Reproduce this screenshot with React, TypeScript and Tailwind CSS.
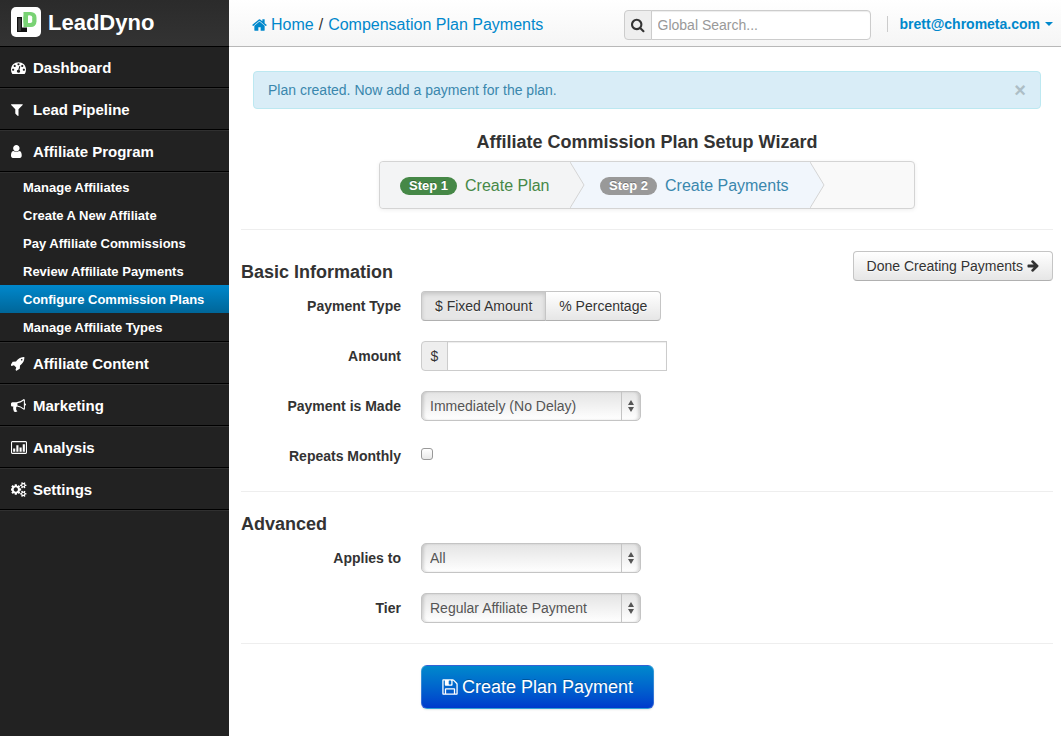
import { useState, type ReactNode } from 'react'

type IconDef = { box: string; d: string }

const ICONS: Record<string, IconDef> = {
  home: {
    box: '64 0 1664 1792',
    d: 'M1472 992v480q0 26-19 45t-45 19h-384v-384h-256v384h-384q-26 0-45-19t-19-45v-480q0-1 .5-3t.5-3l575-474 575 474q1 2 1 6zm223-69l-62 74q-8 9-21 11h-3q-13 0-21-7l-692-577-692 577q-12 8-24 7-13-2-21-11l-62-74q-8-10-7-23.5t11-21.5l719-599q32-26 76-26t76 26l244 204v-195q0-14 9-23t23-9h192q14 0 23 9t9 23v408l219 182q10 8 11 21.5t-7 23.5z',
  },
  dashboard: {
    box: '0 0 1792 1792',
    d: 'M384 1152q0-53-37.5-90.5t-90.5-37.5-90.5 37.5-37.5 90.5 37.5 90.5 90.5 37.5 90.5-37.5 37.5-90.5zm192-448q0-53-37.5-90.5t-90.5-37.5-90.5 37.5-37.5 90.5 37.5 90.5 90.5 37.5 90.5-37.5 37.5-90.5zm428 481l101-382q6-26-7.5-48.5t-38.5-29.5-48 6.5-30 39.5l-101 382q-60 5-107 43.5t-63 98.5q-20 77 20 146t117 89 146-20 89-117q16-60-6-117t-72-91zm660-33q0-53-37.5-90.5t-90.5-37.5-90.5 37.5-37.5 90.5 37.5 90.5 90.5 37.5 90.5-37.5 37.5-90.5zm-640-640q0-53-37.5-90.5t-90.5-37.5-90.5 37.5-37.5 90.5 37.5 90.5 90.5 37.5 90.5-37.5 37.5-90.5zm448 192q0-53-37.5-90.5t-90.5-37.5-90.5 37.5-37.5 90.5 37.5 90.5 90.5 37.5 90.5-37.5 37.5-90.5zm320 448q0 261-141 483-19 29-54 29h-1402q-35 0-54-29-141-221-141-483 0-182 71-348t191-286 286-191 348-71 348 71 286 191 191 286 71 348z',
  },
  filter: {
    box: '192 0 1792 1792',
    d: 'M1595 295q17 41-14 70l-493 493v742q0 42-39 59-13 5-25 5-27 0-45-19l-256-256q-19-19-19-45v-486l-493-493q-31-29-14-70 17-39 59-39h1280q42 0 59 39z',
  },
  user: {
    box: '256 0 1792 1792',
    d: 'M1536 1399q0 109-62.5 187t-150.5 78h-854q-88 0-150.5-78t-62.5-187q0-85 8.5-160.5t31.5-152 58.5-131 94-89 134.5-34.5q131 128 313 128t313-128q76 0 134.5 34.5t94 89 58.5 131 31.5 152 8.5 160.5zm-256-887q0 159-112.5 271.5t-271.5 112.5-271.5-112.5-112.5-271.5 112.5-271.5 271.5-112.5 271.5 112.5 112.5 271.5z',
  },
  rocket: {
    box: '64 0 1792 1792',
    d: 'M1440 448q0-40-28-68t-68-28-68 28-28 68 28 68 68 28 68-28 28-68zm224-288q0 249-75.5 430.5t-253.5 360.5q-81 80-195 176l-20 379q-2 16-16 26l-384 224q-7 4-16 4-12 0-23-9l-64-64q-13-14-8-32l85-276-281-281-276 85q-3 1-9 1-14 0-23-9l-64-64q-17-19-5-39l224-384q10-14 26-16l379-20q96-114 176-195 188-187 358-258t431-71q14 0 24 9.5t10 22.5z',
  },
  bullhorn: {
    box: '0 0 1792 1792',
    d: 'M1664 640q53 0 90.5 37.5t37.5 90.5-37.5 90.5-90.5 37.5v384q0 52-38 90t-90 38q-417-347-812-380-58 19-91 66t-31 100.5 40 92.5q-20 33-23 65.5t6 58 33.5 55 48 50 61.5 50.5q-29 58-111.5 83t-168.5 11.5-132-55.5q-7-23-29.5-87.5t-32-94.5-23-89-15-101 3.5-98.5 22-110.5h-122q-66 0-113-47t-47-113v-192q0-66 47-113t113-47h480q435 0 896-384 52 0 90 38t38 90v384zm-128 604v-954q-394 302-768 343v270q377 42 768 341z',
  },
  chart: {
    box: '0 0 1920 1792',
    d: 'M160 128h1600q66 0 113 47t47 113v1216q0 66-47 113t-113 47h-1600q-66 0-113-47t-47-113v-1216q0-66 47-113t113-47zm0 128q-13 0-22.500 9.500t-9.500 22.500v1216q0 13 9.500 22.500t22.500 9.500h1600q13 0 22.500-9.500t9.500-22.500v-1216q0-13-9.500-22.500t-22.500-9.500zM256 1024h256v384h-256zM640 640h256v768h-256zM1024 896h256v512h-256zM1408 512h256v896h-256z',
  },
  cogs: {
    box: '0 0 1920 1792',
    d: 'M832 896q0-106-75-181t-181-75-181 75-75 181 75 181 181 75 181-75 75-181zm768 512q0-52-38-90t-90-38-90 38-38 90q0 53 37.5 90.5t90.5 37.5 90.5-37.5 37.5-90.5zm0-1024q0-52-38-90t-90-38-90 38-38 90q0 53 37.5 90.5t90.5 37.5 90.5-37.5 37.5-90.5zm-384 421v185q0 10-7 19.5t-16 10.5l-155 24q-11 35-32 76 34 48 90 115 7 11 7 20 0 12-7 19-23 30-82.5 89.5t-78.5 59.5q-11 0-21-7l-115-90q-37 19-77 31-11 108-23 155-7 24-30 24h-186q-11 0-20-7.5t-10-17.5l-23-153q-34-10-75-31l-118 89q-7 7-20 7-11 0-21-8-144-133-144-160 0-9 7-19 10-14 41-53t47-61q-23-44-35-82l-152-24q-10-1-17-9.500t-7-19.500v-185q0-10 7-19.500t16-10.500l155-24q11-35 32-76-34-48-90-115-7-11-7-20 0-12 7-20 22-30 82-89t79-59q11 0 21 7l115 90q34-18 77-32 11-108 23-154 7-24 30-24h186q11 0 20 7.500t10 17.500l23 153q34 10 75 31l118-89q8-7 20-7 11 0 21 8 144 133 144 160 0 8-7 19-12 16-42 54t-45 60q23 48 34 82l152 23q10 2 17 10.500t7 19.500zm640 533v140q0 16-149 31-12 27-30 52 51 113 51 138 0 4-4 7-122 71-124 71-8 0-46-47t-52-68q-20 2-30 2t-30-2q-14 21-52 68t-46 47q-2 0-124-71-4-3-4-7 0-25 51-138-18-25-30-52-149-15-149-31v-140q0-16 149-31 13-29 30-52-51-113-51-138 0-4 4-7 4-2 35-20t59-34 30-16q8 0 46 46.500t52 67.500q20-2 30-2t30 2q51-71 92-112l6-2q4 0 124 70 4 3 4 7 0 25-51 138 17 23 30 52 149 15 149 31zm0-1024v140q0 16-149 31-12 27-30 52 51 113 51 138 0 4-4 7-122 71-124 71-8 0-46-47t-52-68q-20 2-30 2t-30-2q-14 21-52 68t-46 47q-2 0-124-71-4-3-4-7 0-25 51-138-18-25-30-52-149-15-149-31v-140q0-16 149-31 13-29 30-52-51-113-51-138 0-4 4-7 4-2 35-20t59-34 30-16q8 0 46 46.500t52 67.500q20-2 30-2t30 2q51-71 92-112l6-2q4 0 124 70 4 3 4 7 0 25-51 138 17 23 30 52 149 15 149 31z',
  },
  search: {
    box: '64 64 1728 1792',
    d: 'M1216 832q0-185-131.500-316.500t-316.500-131.500-316.500 131.500-131.500 316.500 131.500 316.500 316.500 131.500 316.500-131.500 131.500-316.500zm512 832q0 52-38 90t-90 38q-54 0-90-38l-343-342q-179 124-399 124-143 0-273.500-55.500t-225-150-150-225-55.500-273.500 55.500-273.500 150-225 225-150 273.500-55.500 273.500 55.500 225 150 150 225 55.500 273.500q0 220-124 399l343 343q37 37 37 90z',
  },
  arrowRight: {
    box: '64 64 1600 1792',
    d: 'M1600 960q0 54-37 91l-651 651q-39 37-91 37-51 0-90-37l-75-75q-38-38-38-91t38-91l293-293h-704q-52 0-84.500-37.500t-32.500-90.500v-128q0-53 32.500-90.500t84.500-37.500h704l-293-294q-38-36-38-90t38-90l75-75q38-38 90-38 53 0 91 38l651 651q37 35 37 90z',
  },
  save: {
    box: '128 0 1536 1792',
    d: 'M512 1536h768v-384h-768v384zm896 0h128v-896q0-14-10-38.500t-20-34.500l-281-281q-10-10-34-20t-39-10v416q0 40-28 68t-68 28h-576q-40 0-68-28t-28-68v-416h-128v1280h128v-416q0-40 28-68t68-28h832q40 0 68 28t28 68v416zm-384-928v-320q0-13-9.500-22.500t-22.500-9.500h-192q-13 0-22.500 9.500t-9.500 22.500v320q0 13 9.500 22.500t22.500 9.500h192q13 0 22.500-9.500t9.500-22.500zm640 32v928q0 40-28 68t-68 28h-1344q-40 0-68-28t-28-68v-1344q0-40 28-68t68-28h928q40 0 88 20t76 48l280 280q28 28 48 76t20 88z',
  },
}

function Icon({ name, className }: { name: string; className: string }) {
  const { box, d } = ICONS[name]
  return (
    <svg viewBox={box} className={className} fill="currentColor" fillRule="evenodd" aria-hidden="true">
      <path d={d} />
    </svg>
  )
}

const NAV = [
  { label: 'Dashboard', icon: 'dashboard' },
  { label: 'Lead Pipeline', icon: 'filter' },
  {
    label: 'Affiliate Program',
    icon: 'user',
    children: [
      'Manage Affiliates',
      'Create A New Affiliate',
      'Pay Affiliate Commissions',
      'Review Affiliate Payments',
      'Configure Commission Plans',
      'Manage Affiliate Types',
    ],
  },
  { label: 'Affiliate Content', icon: 'rocket' },
  { label: 'Marketing', icon: 'bullhorn' },
  { label: 'Analysis', icon: 'chart' },
  { label: 'Settings', icon: 'cogs' },
]

const ACTIVE = 'Configure Commission Plans'

function Logo() {
  return (
    <svg viewBox="0 0 30 30" className="size-[30px] shrink-0" aria-hidden="true">
      <rect width="30" height="30" rx="5" fill="#fff" />
      <rect x="6" y="10" width="5" height="15" fill="#111" />
      <rect x="6" y="20.500" width="10" height="4.500" fill="#111" />
      <rect x="7.200" y="11.200" width="2.600" height="12.600" fill="#444" />
      <rect x="12.500" y="5" width="13" height="15" rx="5.500" fill="#79d274" />
      <rect x="12.500" y="5" width="6" height="15" fill="#79d274" />
      <rect x="17" y="8.500" width="4.200" height="7.500" rx="1.800" fill="#fff" />
      <rect x="17" y="8.500" width="2" height="7.500" fill="#fff" />
    </svg>
  )
}

function Sidebar() {
  return (
    <aside className="w-[229px] shrink-0 bg-[#222] font-bold text-white">
      <a href="#" className="flex h-[47px] items-center gap-[7px] border-b border-black bg-linear-to-b from-[#2b2b2b] to-[#333] pb-[2px] pl-[11px] text-[22px]">
        <Logo />
        <span className="pt-[2px]">LeadDyno</span>
      </a>
      <nav>
        <ul className="border-b border-[#303030]">
          {NAV.map((item, i) => (
            <li key={item.label}>
              <a
                href="#"
                className={`flex items-center border-b border-b-black pl-[11px] text-[15px] leading-5 ${i === 0 ? 'h-[41px]' : 'h-[42px] border-t border-t-[#303030]'}`}
              >
                <span className="flex w-[22px]">
                  <Icon name={item.icon} className={item.icon === 'chart' || item.icon === 'cogs' ? 'h-[15px] w-4' : 'size-[15px]'} />
                </span>
                <span className="pt-[2px]">{item.label}</span>
              </a>
              {item.children && (
                <ul className="border-b border-t border-b-black border-t-[#303030]">
                  {item.children.map((child) => (
                    <li key={child}>
                      <a
                        href="#"
                        className={`block pl-[23px] pt-[2px] text-[13px] leading-[26px] ${child === ACTIVE ? 'bg-linear-to-b from-[#0088cc] to-[#006699]' : ''}`}
                      >
                        {child}
                      </a>
                    </li>
                  ))}
                </ul>
              )}
            </li>
          ))}
        </ul>
      </nav>
    </aside>
  )
}

function TopBar() {
  return (
    <header className="flex h-[47px] items-center justify-between border-b border-[#b8b8b8] bg-linear-to-b from-white to-[#f5f5f5] pl-[23px] pr-2 pt-1">
      <nav className="flex items-center gap-[5px] text-[16px]">
        <a href="#" className="flex items-center gap-1 text-[#08c]">
          <Icon name="home" className="h-4 w-[15px]" />
          Home
        </a>
        <span>/</span>
        <a href="#" className="text-[#08c]">Compensation Plan Payments</a>
      </nav>
      <div className="flex items-center">
        <label htmlFor="search" className="flex h-[30px] w-7 items-center justify-center rounded-l border border-[#ccc] bg-[#eee]">
          <Icon name="search" className="h-[15px] w-[14px]" />
        </label>
        <input
          id="search"
          type="text"
          aria-label="Global Search"
          placeholder="Global Search..."
          className="-ml-px h-[30px] w-[220px] rounded-r border border-[#ccc] bg-white px-[6px] text-[14px] shadow-[inset_0_1px_1px_rgba(0,0,0,0.075)] placeholder:text-[#999]"
        />
        <div className="ml-4 flex items-center gap-3 pb-[2px]">
          <span className="h-4 border-l border-[#ccc]" />
          <button type="button" className="flex items-center gap-[5px] text-[14px] font-bold text-[#08c]">
            brett@chrometa.com
            <svg viewBox="0 0 8 4" className="h-1 w-2" fill="currentColor" aria-hidden="true">
              <path d="M0 0h8L4 4z" />
            </svg>
          </button>
        </div>
      </div>
    </header>
  )
}

function Chevron({ fill }: { fill: string }) {
  return (
    <svg viewBox="0 0 15 46" className="absolute left-full top-0 z-10 h-full w-[15px]" preserveAspectRatio="none" aria-hidden="true">
      <path d="M0 0L14 23L0 46z" fill={fill} />
      <path d="M0 0L14 23L0 46" fill="none" stroke="#d4d4d4" />
    </svg>
  )
}

const BADGE =
  'w-[57px] rounded-full text-center text-[13px] font-bold leading-[18px] text-white [text-shadow:0_-1px_0_rgba(0,0,0,0.25)]'

function Wizard() {
  return (
    <ol className="mx-auto flex h-12 w-[536px] rounded border border-[#d4d4d4] bg-[#f9f9f9] text-[16px] shadow-[0_1px_4px_rgba(0,0,0,0.065)]">
      <li className="relative flex w-[190px] items-center gap-2 rounded-l bg-[#f3f4f5] pl-5 pt-[2px] text-[#468847]">
        <span className={`${BADGE} bg-[#468847]`}>Step 1</span>
        Create Plan
        <Chevron fill="#f3f4f5" />
      </li>
      <li className="relative flex w-[240px] items-center gap-2 bg-[#f1f6fc] pl-[30px] pt-[2px] text-[#3a87ad]">
        <span className={`${BADGE} bg-[#999]`}>Step 2</span>
        Create Payments
        <Chevron fill="#f1f6fc" />
      </li>
    </ol>
  )
}

function Row({ label, htmlFor, children }: { label: string; htmlFor?: string; children: ReactNode }) {
  return (
    <div className="mb-5 flex h-[30px] items-center gap-5">
      {htmlFor ? (
        <label htmlFor={htmlFor} className="w-40 text-right font-bold">{label}</label>
      ) : (
        <span className="w-40 text-right font-bold">{label}</span>
      )}
      {children}
    </div>
  )
}

function Select({ id, options }: { id: string; options: string[] }) {
  return (
    <div className="relative w-[220px]">
      <select
        id={id}
        className="h-[30px] w-full appearance-none rounded-[5px] border border-[#c4c4c4] bg-linear-to-b from-[#e4e4e4] to-white pl-2 pr-6 text-[14px] text-[#555] shadow-[inset_3px_0_3px_-1px_rgba(0,0,0,0.14),inset_-3px_0_3px_-1px_rgba(0,0,0,0.14)]"
      >
        {options.map((o) => (
          <option key={o}>{o}</option>
        ))}
      </select>
      <span className="pointer-events-none absolute inset-y-px right-px flex w-[19px] items-center justify-center border-l border-[#c4c4c4]">
        <svg viewBox="0 0 6 12" className="h-3 w-[6px]" fill="#555" aria-hidden="true">
          <path d="M0 5L3 0L6 5zM0 7h6L3 12z" />
        </svg>
      </span>
    </div>
  )
}

function Divider() {
  return <hr className="h-[2px] border-t border-[#eee]" />
}

const HEADING = 'pt-[2px] text-[18px] font-bold leading-[38px]'
const BUTTON =
  'h-[30px] border border-[#c5c5c5] border-b-[#b0b0b0] px-[13px] text-[14px] [text-shadow:0_1px_1px_rgba(255,255,255,0.75)]'
const RAISED = 'bg-linear-to-b from-white to-[#e6e6e6]'
const PRESSED = 'bg-[#e6e6e6] shadow-[inset_0_2px_4px_rgba(0,0,0,0.15)]'

export default function App() {
  const [fixed, setFixed] = useState(true)
  const [alert, setAlert] = useState(true)
  return (
    <div className="flex min-h-screen bg-white font-['Liberation_Sans',Arial,sans-serif] text-[14px] leading-5 text-[#333]">
      <Sidebar />
      <div className="min-w-0 flex-1">
        <TopBar />
        <main className="pl-3 pr-2">
          {alert && (
            <div role="alert" className="mx-3 mt-6 flex h-[38px] items-center justify-between rounded border border-[#bce8f1] bg-[#d9edf7] px-[14px] text-[#3a87ad]">
              Plan created. Now add a payment for the plan.
              <button type="button" aria-label="Close" onClick={() => setAlert(false)} className="text-[20px] font-bold text-[#adbec6]">
                ×
              </button>
            </div>
          )}
          <h2 className={`${HEADING} mt-3 text-center`}>Affiliate Commission Plan Setup Wizard</h2>
          <div className="pb-5">
            <Wizard />
          </div>
          <Divider />

          <form onSubmit={(e) => e.preventDefault()}>
            <div className="mt-5 flex items-start justify-between">
              <h3 className={HEADING}>Basic Information</h3>
              <button type="button" className={`${BUTTON} ${RAISED} flex items-center gap-1 rounded`}>
                Done Creating Payments
                <Icon name="arrowRight" className="h-[14px] w-3" />
              </button>
            </div>
            <Row label="Payment Type">
              <div className="flex" role="group" aria-label="Payment Type">
                <button type="button" aria-pressed={fixed} onClick={() => setFixed(true)} className={`${BUTTON} ${fixed ? PRESSED : RAISED} rounded-l`}>
                  $ Fixed Amount
                </button>
                <button type="button" aria-pressed={!fixed} onClick={() => setFixed(false)} className={`${BUTTON} ${fixed ? RAISED : PRESSED} -ml-px rounded-r`}>
                  % Percentage
                </button>
              </div>
            </Row>
            <Row label="Amount" htmlFor="amount">
              <div className="flex">
                <span className="flex h-[30px] w-[27px] items-center justify-center rounded-l border border-[#ccc] bg-[#eee]">$</span>
                <input id="amount" type="text" className="-ml-px h-[30px] w-[220px] border border-[#ccc] bg-white px-[6px] text-[14px] shadow-[inset_0_1px_1px_rgba(0,0,0,0.075)]" />
              </div>
            </Row>
            <Row label="Payment is Made" htmlFor="delay">
              <Select id="delay" options={['Immediately (No Delay)', 'After 30 Days']} />
            </Row>
            <Row label="Repeats Monthly" htmlFor="repeats">
              <input
                id="repeats"
                type="checkbox"
                className="mb-1 size-3 appearance-none rounded-[3px] border border-[#999] bg-linear-to-b from-white to-[#e8e8e8] checked:bg-[#08c]"
              />
            </Row>
            <Divider />

            <h3 className={`${HEADING} mt-[10px]`}>Advanced</h3>
            <Row label="Applies to" htmlFor="applies">
              <Select id="applies" options={['All']} />
            </Row>
            <Row label="Tier" htmlFor="tier">
              <Select id="tier" options={['Regular Affiliate Payment']} />
            </Row>
            <Divider />

            <div className="py-5 pl-[180px]">
              <button
                type="submit"
                className="flex h-11 items-center gap-1 rounded-[6px] border border-white/20 bg-linear-to-b from-[#0088cc] to-[#0039cc] px-5 text-[18px] text-white shadow-[0_1px_2px_rgba(0,0,0,0.1)] [text-shadow:0_-1px_0_rgba(0,0,0,0.25)]"
              >
                <Icon name="save" className="h-[18px] w-4" />
                Create Plan Payment
              </button>
            </div>
          </form>
        </main>
      </div>
    </div>
  )
}
